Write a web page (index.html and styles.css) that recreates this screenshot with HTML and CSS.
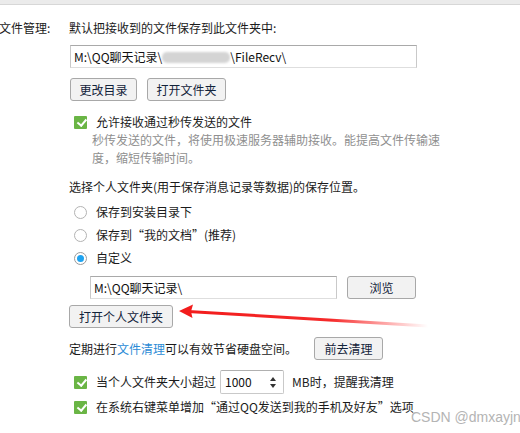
FILE: index.html
```html
<!DOCTYPE html>
<html lang="zh">
<head>
<meta charset="utf-8">
<link rel="stylesheet" href="styles.css">
</head>
<body>
<div class="topbar"></div>
<div class="panel">
  <div class="label">文件管理:</div>
  <div class="content">
    <div class="line">默认把接收到的文件保存到此文件夹中:</div>
    <div class="field field-wide">M:\QQ聊天记录\<span class="blur"></span>\FileRecv\</div>
    <div class="btn-row">
      <button class="btn">更改目录</button>
      <button class="btn">打开文件夹</button>
    </div>

    <div class="check-row first-check"><span class="check"></span><span>允许接收通过秒传发送的文件</span></div>
    <div class="desc">秒传发送的文件，将使用极速服务器辅助接收。能提高文件传输速<br>度，缩短传输时间。</div>

    <div class="line section">选择个人文件夹(用于保存消息记录等数据)的保存位置。</div>
    <div class="radio-row r1"><span class="radio"></span><span>保存到安装目录下</span></div>
    <div class="radio-row"><span class="radio"></span><span>保存到“我的文档”(推荐)</span></div>
    <div class="radio-row"><span class="radio on"></span><span>自定义</span></div>

    <div class="path-row">
      <div class="field field-path">M:\QQ聊天记录\</div>
      <button class="btn btn-browse">浏览</button>
    </div>
    <button class="btn btn-open">打开个人文件夹</button>

    <div class="clean-row">
      <span>定期进行<span class="link">文件清理</span>可以有效节省硬盘空间。</span>
      <button class="btn btn-clean">前去清理</button>
    </div>

    <div class="check-row size-row">
      <span class="check"></span><span>当个人文件夹大小超过</span>
      <div class="spin"><span>1000</span><span class="arrows"><i class="up"></i><i class="down"></i></span></div>
      <span>MB时，提醒我清理</span>
    </div>
    <div class="check-row last-check"><span class="check"></span><span>在系统右键菜单增加“通过QQ发送到我的手机及好友”选项</span></div>
  </div>
</div>

<svg class="arrow" width="520" height="433" viewBox="0 0 520 433">
  <defs>
    <linearGradient id="fade" x1="186" y1="0" x2="428" y2="0" gradientUnits="userSpaceOnUse">
      <stop offset="0" stop-color="#f21c1c"/>
      <stop offset="0.6" stop-color="#f52a2a"/>
      <stop offset="1" stop-color="#ff4040" stop-opacity="0"/>
    </linearGradient>
  </defs>
  <path d="M188 311.5 L428 326" stroke="url(#fade)" stroke-width="3" stroke-linecap="round" fill="none"/>
  <path d="M179 311 L193 304.5 L191 311.5 L192.5 318 Z" fill="#f21c1c"/>
</svg>

<div class="watermark">CSDN @dmxayjn</div>
</body>
</html>
```

FILE: styles.css
```css
* { box-sizing: border-box; }

body {
  margin: 0;
  width: 520px;
  height: 433px;
  overflow: hidden;
  background: #ffffff;
  font-family: "Noto Sans CJK SC", "Noto Sans", sans-serif;
  font-size: 12px;
  line-height: 18px;
  color: #1b1b1b;
  position: relative;
}

.topbar {
  height: 5px;
  background: #ebebeb;
  border-bottom: 1px solid #d7d7d7;
}

.panel {
  display: grid;
  grid-template-columns: 69px 1fr;
  padding-top: 14px;
}

.label {
  margin-left: -1px;
  line-height: 18px;
}

.content {
  display: flex;
  flex-direction: column;
  align-items: flex-start;
}

.field {
  height: 23px;
  border: 1px solid #c9c9c9;
  border-top-color: #a9a9a9;
  border-bottom-color: #dedede;
  background: #fff;
  line-height: 21px;
  padding-left: 3px;
  white-space: nowrap;
  color: #111;
}

.field-wide {
  margin-top: 8px;
  margin-left: 1px;
  width: 347px;
}

.blur {
  display: inline-block;
  width: 68px;
  height: 11px;
  vertical-align: -1px;
  background: #d4d4d4;
  border-radius: 5px;
  filter: blur(1.2px);
}

.btn-row {
  display: flex;
  gap: 10px;
  margin-top: 10px;
  margin-left: 1px;
}

.btn {
  height: 23px;
  padding: 0 8.5px;
  border: 1px solid #a8a8a8;
  border-radius: 3px;
  background: #f2f2f2;
  font-family: inherit;
  font-size: 12px;
  line-height: 21px;
  color: #12233a;
}

.check-row {
  display: flex;
  align-items: center;
  margin-left: 5px;
  line-height: 18px;
}

.first-check { margin-top: 12px; }

.check {
  width: 13px;
  height: 13px;
  margin-right: 9px;
  border-radius: 1px;
  background: #6ab545;
  position: relative;
  flex: none;
}

.check::after {
  content: "";
  position: absolute;
  left: 4.5px;
  top: 1.5px;
  width: 3.5px;
  height: 7px;
  border: solid #fff;
  border-width: 0 2px 2px 0;
  transform: rotate(40deg);
}

.desc {
  margin-left: 23px;
  color: #8f8f8f;
  line-height: 18px;
}

.section { margin-top: 11px; }

.radio-row {
  display: flex;
  align-items: center;
  margin-left: 5px;
  margin-top: 5px;
}

.radio-row.r1 { margin-top: 7px; }

.radio {
  width: 13px;
  height: 13px;
  margin-right: 9px;
  border: 1px solid #b3b3b3;
  border-radius: 50%;
  background: #fff;
  flex: none;
  position: relative;
}

.radio.on {
  border-color: #9a9a9a;
}

.radio.on::after {
  content: "";
  position: absolute;
  left: 2px;
  top: 2px;
  width: 7px;
  height: 7px;
  border-radius: 50%;
  background: #1ea3f0;
}

.path-row {
  display: flex;
  gap: 10px;
  margin-top: 9px;
  margin-left: 21px;
}

.field-path { width: 247px; }

.btn-browse { width: 69px; }

.btn-open {
  margin-top: 6px;
  margin-left: 0;
  width: 104px;
  padding: 0;
}

.clean-row {
  display: flex;
  align-items: center;
  margin-top: 9px;
}

.link { color: #2b8bd6; }

.btn-clean {
  margin-left: 17px;
  width: 69px;
  padding: 0;
}

.size-row { margin-top: 10px; }

.spin {
  display: flex;
  align-items: center;
  justify-content: space-between;
  width: 64px;
  height: 24px;
  margin-left: 4px;
  margin-right: 8px;
  padding: 0 7px 0 4px;
  border: 1px solid #c9c9c9;
  border-top-color: #b0b0b0;
  border-radius: 2px;
  color: #111;
}

.arrows {
  display: flex;
  flex-direction: column;
  gap: 3px;
}

.arrows i {
  width: 0;
  height: 0;
  border-left: 3.5px solid transparent;
  border-right: 3.5px solid transparent;
}

.arrows .up { border-bottom: 4px solid #333; }
.arrows .down { border-top: 4px solid #333; }

.last-check { margin-top: 4px; }

.arrow {
  position: absolute;
  left: 0;
  top: 0;
  pointer-events: none;
}

.watermark {
  position: absolute;
  left: 411px;
  top: 408px;
  white-space: nowrap;
  font-family: "Liberation Sans", Arial, sans-serif;
  font-size: 14px;
  line-height: 18px;
  color: #b4b4b4;
}
```
